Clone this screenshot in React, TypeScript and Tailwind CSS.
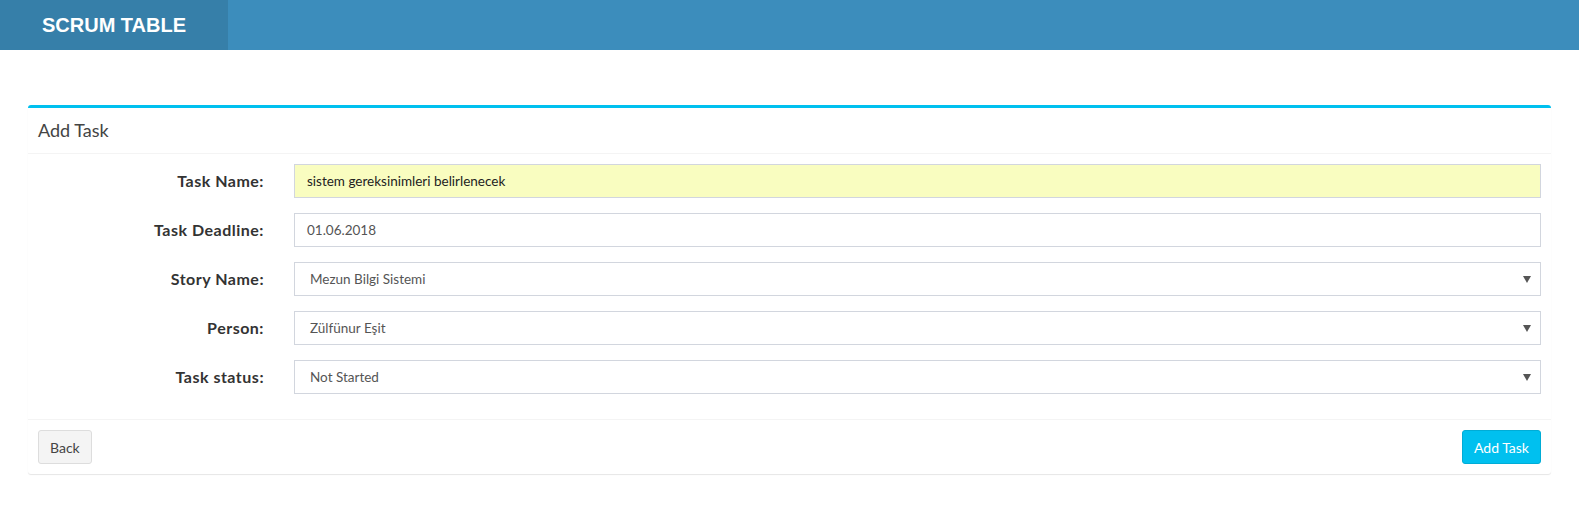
import React from "react"

const rows = [
  { label: "Task Name:", value: "sistem gereksinimleri belirlenecek", kind: "filled" },
  { label: "Task Deadline:", value: "01.06.2018", kind: "input" },
  { label: "Story Name:", value: "Mezun Bilgi Sistemi", kind: "select" },
  { label: "Person:", value: "Zülfünur Eşit", kind: "select" },
  { label: "Task status:", value: "Not Started", kind: "select" },
]

const Caret = () => (
  <svg width="8" height="7" viewBox="0 0 8 7" className="shrink-0">
    <polygon points="0,0 8,0 4,7" fill="#555555" />
  </svg>
)

const Field = ({ value, kind }: { value: string; kind: string }) => {
  if (kind === "select") {
    return (
      <div className="flex h-[34px] flex-1 items-center justify-between border border-[#d2d6de] bg-white pl-[15px] pr-[9px] text-[13.5px] text-[#555]">
        <span>{value}</span>
        <Caret />
      </div>
    )
  }
  return (
    <div
      className={
        kind === "filled"
          ? "flex h-[34px] flex-1 items-center border border-[#d2d6de] bg-[#f9fdc0] pl-[12px] text-[13.5px] text-[#222]"
          : "flex h-[34px] flex-1 items-center border border-[#d2d6de] bg-white pl-[12px] text-[13.5px] text-[#555]"
      }
    >
      {value}
    </div>
  )
}

export default function App() {
  return (
    <div className="min-h-[506px] bg-white font-['Lato','Open_Sans',sans-serif]">
      <header className="flex h-[50px] bg-[#3c8dbc]">
        <div className="flex w-[228px] items-center justify-center bg-[#367fa9] font-['Liberation_Sans',Arial,sans-serif] text-[20px] font-bold text-white">
          SCRUM TABLE
        </div>
      </header>

      <div className="px-[28px] pt-[55px]">
        <div className="rounded-[3px] border-t-[3px] border-[#00c0ef] bg-white shadow-[0_1px_1px_rgba(0,0,0,0.1)]">
          <div className="flex h-[46px] items-center border-b border-[#f4f4f4] px-[10px] text-[18px] text-[#444]">
            Add Task
          </div>

          <div className="flex flex-col gap-[15px] px-[10px] pt-[10px] pb-[25px]">
            {rows.map((row) => (
              <div key={row.label} className="flex items-center">
                <label className="w-[226px] text-right text-[16px] font-bold tracking-[0.5px] text-[#333]">
                  {row.label}
                </label>
                <div className="w-[30px]" />
                <Field value={row.value} kind={row.kind} />
              </div>
            ))}
          </div>

          <div className="flex items-center justify-between border-t border-[#f4f4f4] p-[10px]">
            <button className="h-[34px] rounded-[3px] border border-[#ddd] bg-[#f4f4f4] px-[11px] text-[14px] text-[#444]">
              Back
            </button>
            <button className="h-[34px] rounded-[3px] border border-[#00acd6] bg-[#00c0ef] px-[11px] text-[14px] text-white">
              Add Task
            </button>
          </div>
        </div>
      </div>
    </div>
  )
}
